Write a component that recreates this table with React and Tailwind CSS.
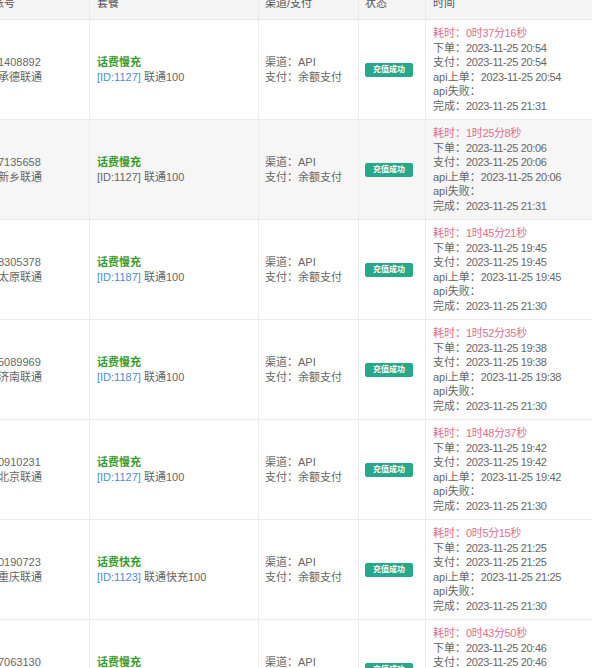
import React from "react";

const rows = [
  {
    acct: "1408892",
    city: "承德联通",
    pkg: "话费慢充",
    id: "[ID:1127]",
    idBlue: true,
    name: "联通100",
    cost: "0时37分16秒",
    t: "2023-11-25 20:54",
    done: "2023-11-25 21:31",
  },
  {
    acct: "7135658",
    city: "新乡联通",
    pkg: "话费慢充",
    id: "[ID:1127]",
    idBlue: false,
    name: "联通100",
    cost: "1时25分8秒",
    t: "2023-11-25 20:06",
    done: "2023-11-25 21:31",
    gray: true,
  },
  {
    acct: "8305378",
    city: "太原联通",
    pkg: "话费慢充",
    id: "[ID:1187]",
    idBlue: true,
    name: "联通100",
    cost: "1时45分21秒",
    t: "2023-11-25 19:45",
    done: "2023-11-25 21:30",
  },
  {
    acct: "5089969",
    city: "济南联通",
    pkg: "话费慢充",
    id: "[ID:1187]",
    idBlue: true,
    name: "联通100",
    cost: "1时52分35秒",
    t: "2023-11-25 19:38",
    done: "2023-11-25 21:30",
  },
  {
    acct: "0910231",
    city: "北京联通",
    pkg: "话费慢充",
    id: "[ID:1127]",
    idBlue: true,
    name: "联通100",
    cost: "1时48分37秒",
    t: "2023-11-25 19:42",
    done: "2023-11-25 21:30",
  },
  {
    acct: "0190723",
    city: "重庆联通",
    pkg: "话费快充",
    id: "[ID:1123]",
    idBlue: true,
    name: "联通快充100",
    cost: "0时5分15秒",
    t: "2023-11-25 21:25",
    done: "2023-11-25 21:30",
  },
  {
    acct: "7063130",
    city: "天津联通",
    pkg: "话费慢充",
    id: "[ID:1127]",
    idBlue: true,
    name: "联通100",
    cost: "0时43分50秒",
    t: "2023-11-25 20:46",
    done: "2023-11-25 21:30",
  },
];

const cols = "grid grid-cols-[102px_169px_100px_67px_1fr]";

// dates are a bit narrower in the reference
const Dt = ({ children }) => <span className="tracking-[-0.35px]">{children}</span>;

const Row = ({ r }) => (
  <div className={`${cols} border-b border-[#e9e9e9] ${r.gray ? "bg-[#f6f6f6]" : "bg-white"}`}>
    {/* 账号 */}
    <div className="flex flex-col justify-center pl-[10px] leading-[15px] border-r border-[#ececec]">
      <span>{r.acct}</span>
      <span>{r.city}</span>
    </div>
    {/* 套餐 */}
    <div className="flex flex-col justify-center pl-[7px] leading-[15px] border-r border-[#ececec]">
      <span className="font-bold text-[#379c2c]">{r.pkg}</span>
      <span>
        <span className={r.idBlue ? "text-[#4a8fd0]" : ""}>{r.id}</span> {r.name}
      </span>
    </div>
    {/* 渠道/支付 */}
    <div className="flex flex-col justify-center pl-[6px] leading-[15px] border-r border-[#ececec]">
      <span>渠道：API</span>
      <span>支付：余额支付</span>
    </div>
    {/* 状态 */}
    <div className="flex items-center pl-[6px] border-r border-[#ececec]">
      <span className="inline-flex items-center justify-center w-[48px] h-[14px] rounded-[2px] bg-[#27a88a] text-white text-[8px] font-bold leading-none">
        充值成功
      </span>
    </div>
    {/* 时间 */}
    <div className="flex flex-col pl-[7px] pt-[6px] pb-[6px] leading-[14.5px]">
      <span className="text-[#dc6f8c]">耗时：<Dt>{r.cost}</Dt></span>
      <span>下单：<Dt>{r.t}</Dt></span>
      <span>支付：<Dt>{r.t}</Dt></span>
      <span>api上单：<Dt>{r.t}</Dt></span>
      <span>api失败：</span>
      <span>完成：<Dt>{r.done}</Dt></span>
    </div>
  </div>
);

export default function App() {
  return (
    <div className="w-[592px] h-[668px] overflow-hidden bg-white">
      <div
        className="-ml-[12px] -mt-[12px] w-[604px] text-[11px] text-[#666]"
        style={{ fontFamily: '"Liberation Sans", "Noto Sans CJK SC", sans-serif' }}
      >
        <div className={`${cols} h-[32px] bg-[#f5f5f5] border-b border-[#e4e4e4] text-[#555]`}>
          <div className="flex items-center pl-[5px] border-r border-[#ececec]">账号</div>
          <div className="flex items-center pl-[7px] border-r border-[#ececec]">套餐</div>
          <div className="flex items-center pl-[6px] border-r border-[#ececec]">渠道/支付</div>
          <div className="flex items-center pl-[6px] border-r border-[#ececec]">状态</div>
          <div className="flex items-center pl-[7px]">时间</div>
        </div>
        {rows.map((r, i) => (
          <Row key={i} r={r} />
        ))}
      </div>
    </div>
  );
}
